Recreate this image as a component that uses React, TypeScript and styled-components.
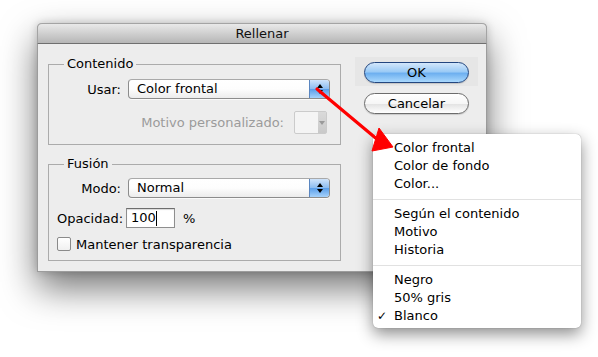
import React from 'react';
import styled, { createGlobalStyle } from 'styled-components';

const GlobalStyle = createGlobalStyle`
  html, body {
    margin: 0;
    padding: 0;
    background: #ffffff;
  }
  body {
    font-family: "Lucida Grande", "DejaVu Sans", sans-serif;
    font-size: 13px;
    color: #000;
  }
`

const Canvas = styled.div`
  position: relative;
  width: 598px;
  height: 357px;
  overflow: hidden;
  background: #fff;
  padding: 23px 0 0 37px;
  box-sizing: border-box;
`

const Dialog = styled.div`
  width: 450px;
  box-sizing: border-box;
  display: flex;
  flex-direction: column;
  background: #ededed;
  border: 1px solid #9c9c9c;
  border-top: none;
  border-radius: 5px 5px 0 0;
  box-shadow: 0 16px 36px rgba(0, 0, 0, 0.55), 0 0 8px rgba(0, 0, 0, 0.18);
`

const TitleBar = styled.div`
  height: 21px;
  box-sizing: border-box;
  margin: 0 -1px;
  border: 1px solid #a4a4a4;
  border-bottom-color: #6f6f6f;
  border-radius: 5px 5px 0 0;
  background: linear-gradient(#e9e9e9, #d2d2d2 45%, #b6b6b6);
  display: flex;
  align-items: center;
  justify-content: center;
  font-size: 13px;
  color: #111;
  line-height: 19px;
`

const Body = styled.div`
  display: flex;
  align-items: flex-start;
  padding: 13px 0 10px 10px;
`

const LeftCol = styled.div`
  width: 293px;
  padding-top: 7px;
  display: flex;
  flex-direction: column;
  gap: 19px;
`

const Group = styled.div<{ $pad: string }>`
  position: relative;
  border: 1px solid #ababab;
  padding: ${p => p.$pad};
  display: flex;
  flex-direction: column;
`

const Legend = styled.span`
  position: absolute;
  top: -9px;
  left: 15px;
  padding: 0 3px;
  line-height: 16px;
  background: #ededed;
`

const FormRow = styled.div`
  display: grid;
  grid-template-columns: 72px 202px;
  column-gap: 7px;
  align-items: center;
`

const Label = styled.span<{ $disabled?: boolean }>`
  text-align: right;
  color: ${p => (p.$disabled ? '#9b9b9b' : '#000')};
  white-space: nowrap;
`

const PopupBox = styled.div`
  position: relative;
  height: 20px;
  box-sizing: border-box;
  border: 1px solid #8c8c8c;
  border-top-color: #a9a9a9;
  border-radius: 4px;
  background: linear-gradient(#ffffff, #fdfdfd 50%, #ececec);
  box-shadow: 0 1px 0 rgba(255, 255, 255, 0.7);
  display: flex;
  align-items: center;
  overflow: hidden;
`

const PopupText = styled.span`
  flex: 1;
  padding-left: 8px;
  line-height: 18px;
`

const Stepper = styled.div`
  width: 19px;
  align-self: stretch;
  border-left: 1px solid #5a86c0;
  background: linear-gradient(#cfe3fa, #8dbdf1 48%, #5b9fea 52%, #a6d2fb);
  display: flex;
  flex-direction: column;
  align-items: center;
  justify-content: center;
  gap: 2px;
`

const Tri = styled.span<{ $down?: boolean; $color?: string }>`
  width: 0;
  height: 0;
  border-left: 3px solid transparent;
  border-right: 3px solid transparent;
  ${p =>
    p.$down
      ? `border-top: 4px solid ${p.$color || '#000'};`
      : `border-bottom: 4px solid ${p.$color || '#000'};`}
`

const SubRow = styled.div`
  display: flex;
  align-items: center;
  justify-content: flex-end;
  gap: 10px;
  padding-right: 13px;
`

const DisabledPopup = styled.div`
  width: 33px;
  height: 23px;
  box-sizing: border-box;
  border: 1px solid #cbcbcb;
  border-radius: 2px;
  background: #f4f4f4;
  display: flex;
  justify-content: flex-end;
`

const DisabledArrow = styled.div`
  width: 8px;
  background: linear-gradient(#dadada, #c9c9c9);
  display: flex;
  align-items: center;
  justify-content: center;
`

const OpacityRow = styled.div`
  display: flex;
  align-items: center;
  padding-left: 8px;
`

const NumberInput = styled.div`
  width: 49px;
  height: 20px;
  box-sizing: border-box;
  margin-left: 3px;
  border: 1px solid #8e8e8e;
  border-top-color: #6e6e6e;
  background: #fff;
  box-shadow: inset 0 1px 1px rgba(0, 0, 0, 0.15);
  display: flex;
  align-items: center;
  padding-left: 4px;
  line-height: 18px;
`

const Caret = styled.span`
  display: inline-block;
  width: 1px;
  height: 15px;
  background: #000;
`

const Percent = styled.span`
  margin-left: 8px;
`

const CheckRow = styled.label`
  display: flex;
  align-items: center;
  gap: 5px;
  padding-left: 8px;
  height: 14px;
`

const CheckBox = styled.span`
  width: 14px;
  height: 14px;
  box-sizing: border-box;
  border: 1px solid #8a8a8a;
  border-radius: 2px;
  background: linear-gradient(#ffffff, #f0f0f0);
`

const RightCol = styled.div`
  margin-left: 14px;
  display: flex;
  flex-direction: column;
`

const FocusArea = styled.div`
  width: 123px;
  height: 29px;
  box-sizing: border-box;
  padding: 5px 9px 3px;
  background: #e6e6e6;
`

const PushButton = styled.div<{ $primary?: boolean }>`
  width: 105px;
  height: 21px;
  box-sizing: border-box;
  border-radius: 11px;
  border: 1px solid ${p => (p.$primary ? '#23467f' : '#6c6c6c')};
  background: ${p =>
    p.$primary
      ? 'linear-gradient(#d3e7fb, #9ccbf6 45%, #6eb0f0 55%, #a9d8fd)'
      : 'linear-gradient(#ffffff, #f6f6f6 50%, #e4e4e4 55%, #ffffff)'};
  box-shadow: 0 1px 1px rgba(0, 0, 0, 0.15);
  display: flex;
  align-items: center;
  justify-content: center;
  line-height: 19px;
  color: #000;
`

const CancelWrap = styled.div`
  margin: 7px 0 0 9px;
`

const Menu = styled.div`
  position: absolute;
  left: 373px;
  top: 134px;
  width: 208px;
  height: 194px;
  box-sizing: border-box;
  padding: 5px 0 3px;
  background: #fff;
  border-radius: 5px;
  box-shadow: 0 6px 16px rgba(0, 0, 0, 0.45), 0 0 1px rgba(0, 0, 0, 0.4);
`

const MenuItem = styled.div`
  height: 18px;
  display: flex;
  align-items: center;
  line-height: 18px;
`

const CheckCol = styled.span`
  width: 21px;
  padding-left: 4px;
  box-sizing: border-box;
  font-size: 12px;
`

const Separator = styled.div`
  height: 12px;
  display: flex;
  align-items: center;
  &::after {
    content: '';
    flex: 1;
    height: 1px;
    background: #e1e1e1;
  }
`

const Overlay = styled.svg`
  position: absolute;
  left: 0;
  top: 0;
  pointer-events: none;
`

type Entry = { label: string; checked?: boolean } | 'sep';

const menuEntries: Entry[] = [
  { label: 'Color frontal' },
  { label: 'Color de fondo' },
  { label: 'Color...' },
  'sep',
  { label: 'Según el contenido' },
  { label: 'Motivo' },
  { label: 'Historia' },
  'sep',
  { label: 'Negro' },
  { label: '50% gris' },
  { label: 'Blanco', checked: true },
];

const Popup = ({ value }: { value: string }) => (
  <PopupBox>
    <PopupText>{value}</PopupText>
    <Stepper>
      <Tri />
      <Tri $down />
    </Stepper>
  </PopupBox>
);

const App = () => {
  return (
    <>
      <GlobalStyle />
      <Canvas>
        <Dialog>
          <TitleBar>Rellenar</TitleBar>
          <Body>
            <LeftCol>
              <Group $pad="14px 0 10px 0">
                <Legend>Contenido</Legend>
                <FormRow>
                  <Label>Usar:</Label>
                  <Popup value="Color frontal" />
                </FormRow>
                <SubRow style={{ marginTop: 12 }}>
                  <Label $disabled>Motivo personalizado:</Label>
                  <DisabledPopup>
                    <DisabledArrow>
                      <Tri $down $color="#9a9a9a" />
                    </DisabledArrow>
                  </DisabledPopup>
                </SubRow>
              </Group>
              <Group $pad="13px 0 9px 0">
                <Legend>Fusión</Legend>
                <FormRow>
                  <Label>Modo:</Label>
                  <Popup value="Normal" />
                </FormRow>
                <OpacityRow style={{ marginTop: 10 }}>
                  <span>Opacidad:</span>
                  <NumberInput>
                    100
                    <Caret />
                  </NumberInput>
                  <Percent>%</Percent>
                </OpacityRow>
                <CheckRow style={{ marginTop: 9 }}>
                  <CheckBox />
                  <span>Mantener transparencia</span>
                </CheckRow>
              </Group>
            </LeftCol>
            <RightCol>
              <FocusArea>
                <PushButton $primary>OK</PushButton>
              </FocusArea>
              <CancelWrap>
                <PushButton>Cancelar</PushButton>
              </CancelWrap>
            </RightCol>
          </Body>
        </Dialog>

        <Menu>
          {menuEntries.map((e, i) =>
            e === 'sep' ? (
              <Separator key={i} />
            ) : (
              <MenuItem key={i}>
                <CheckCol>{e.checked ? '✓' : ''}</CheckCol>
                <span>{e.label}</span>
              </MenuItem>
            )
          )}
        </Menu>

        <Overlay width="598" height="357" viewBox="0 0 598 357">
          <line x1="317" y1="89" x2="378" y2="140" stroke="#ff0000" strokeWidth="3.2" strokeLinecap="round" />
          <polygon points="379,128 372,151 393,147" fill="#ff0000" stroke="#ff0000" strokeWidth="1" strokeLinejoin="round" />
        </Overlay>
      </Canvas>
    </>
  );
};

export default App;
